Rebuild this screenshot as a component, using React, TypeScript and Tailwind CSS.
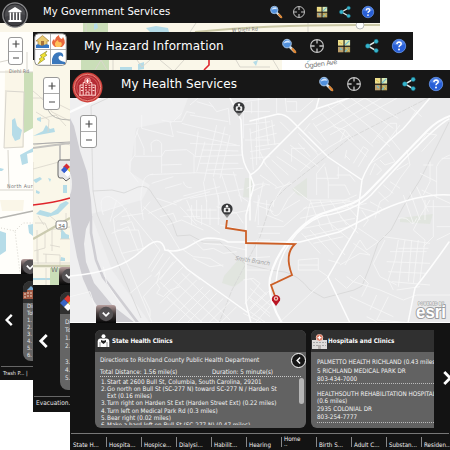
import React from "react";

const font = "font-['DejaVu_Sans_Condensed','DejaVu_Sans',sans-serif]";

function SearchIcon() {
  return (
    <svg viewBox="0 0 14 14" className="h-full w-full overflow-visible">
      <path d="M8 8L12.5 12.5" stroke="#d9e3e8" strokeWidth="2.5" strokeLinecap="round" />
      <path d="M10.5 10L13.3 13.2" stroke="#df8530" strokeWidth="2.2" strokeLinecap="round" />
      <circle cx="5" cy="4.6" r="4.3" fill="#5190dc" stroke="#a6c4e5" strokeWidth="1" />
      <path d="M1.8 4.4Q3 1.2 6.5 1.6Q8 2 8 3.8Q5 3 1.8 4.4Z" fill="#d3e6ff" />
    </svg>
  );
}
function TargetIcon() {
  return (
    <svg viewBox="0 0 14 14" className="h-full w-full overflow-visible" fill="none" stroke="#c6c6c6">
      <circle cx="7" cy="7" r="6.4" strokeWidth="1.1" />
      <path d="M7 1V4.6M7 9.4V13M1 7H4.6M9.4 7H13" strokeWidth="1.3" />
    </svg>
  );
}
function GridIcon() {
  return (
    <svg viewBox="0 0 14 14" className="h-full w-full overflow-visible">
      <rect x="1" y="1" width="5.5" height="5.6" fill="#eddf8c" />
      <rect x="7.6" y="1" width="5.5" height="5.6" fill="#dceab3" />
      <rect x="1" y="7.8" width="5.5" height="5.5" fill="#bc9f6a" />
      <rect x="7.6" y="7.8" width="5.5" height="5.5" fill="#b9a35c" />
      <path d="M8 6L12.5 1.6M8 12.8L11 9.5M3 9l2 2" stroke="#74bdcb" strokeWidth="1.2" />
      <path d="M9 9L12 12M2 3L5 5" stroke="#e0bd55" />
    </svg>
  );
}
function ShareIcon() {
  return (
    <svg viewBox="0 0 14 14" className="h-full w-full overflow-visible">
      <path d="M11 2.3L3 7L11 11.7" fill="none" stroke="#e1eded" strokeWidth="1.5" />
      <g fill="#36b5cc" stroke="#176d81" strokeWidth=".5">
        <circle cx="11.2" cy="2.4" r="2.1" /><circle cx="2.8" cy="7" r="2.3" /><circle cx="11.2" cy="11.6" r="2.1" />
      </g>
    </svg>
  );
}
function HelpIcon() {
  return (
    <svg viewBox="0 0 14 14" className="h-full w-full overflow-visible">
      <circle cx="7" cy="7" r="6.7" fill="#285fd7" stroke="#6999ed" strokeWidth=".8" />
      <path d="M1 5Q2.4.8 7 1Q11.6.8 13 5Q7 8 1 5Z" fill="#6b9af1" opacity=".5" />
      <path d="M4.9 5.1Q5 3 7.1 3Q9.2 3.1 9.2 4.8Q9.2 6 7.9 6.6Q7 7.1 7 8.3" fill="none" stroke="#fff" strokeWidth="1.5" />
      <circle cx="7" cy="10.6" r="1" fill="#fff" />
    </svg>
  );
}

function GovernmentBadge() {
  return (
    <svg width="26" height="26" viewBox="0 0 26 26">
      <circle cx="13" cy="13" r="12.2" fill="#29292c" stroke="#8c8c8e" strokeWidth="1.3" />
      <circle cx="13" cy="13" r="10.5" fill="#3f3f43" />
      <path d="M3 15Q3 3 13 2.8Q23 3 23 13Q13 10 3 15Z" fill="#56565a" opacity=".6" />
      <path d="M6.5 9L13 5L19.5 9V10.3H6.5ZM6.5 18H19.5V20H6.5Z" fill="#fff" />
      <path d="M8.4 10.5V18M11.5 10.5V18M14.6 10.5V18M17.7 10.5V18" stroke="#fff" strokeWidth="1.5" />
    </svg>
  );
}
function HazardBadge() {
  return (
    <svg width="33" height="33" viewBox="0 0 33 33">
      <rect x=".7" y=".7" width="31.6" height="31.6" rx="4" fill="#fff" stroke="#888" />
      <path d="M16.5 1V32M1 16.5H32" stroke="#9b9b9b" strokeWidth=".8" />
      <path d="M2 8L8.5 2.5L15 8L13 8V13H4V8Z" fill="#ebcb72" stroke="#a6813c" strokeWidth=".7" />
      <path d="M7 8h3v5h-3Z" fill="#a5723b" />
      <path d="M2 12Q4 10.5 6 12T10 12T15 12V15H2Z" fill="#3475c1" />
      <path d="M21 14Q15.5 10 20 6L21 8Q21 4 25 2Q25 5 28 6L29 4Q33 10 28 14Z" fill="#e9673e" />
      <path d="M22 14Q19 10 24 7Q24 10 27 9Q29 12 26 14Z" fill="#ffc25a" />
      <path d="M13 18L6 22.5L8 24L5 26L6.5 27L4 31L11 26L9 25L13 22L11 21Z" fill="#f1e331" stroke="#8b852a" strokeWidth=".6" />
      <path d="M18 31V26Q20 18 27 19.5Q30 21 29 24Q26 21 24.5 24Q24 28 31 29V31Z" fill="#3a77bc" />
    </svg>
  );
}
function HospitalBadge() {
  return (
    <svg width="31" height="31" viewBox="0 0 31 31">
      <circle cx="15.5" cy="15.5" r="15" fill="#cf3f3a" />
      <circle cx="15.5" cy="15.5" r="13.2" fill="#b72d34" stroke="#e5897e" strokeWidth="1" />
      <circle cx="15.5" cy="15.5" r="10.8" fill="#b52b34" stroke="#d96a66" strokeWidth=".7" />
      <g fill="none" stroke="#ffd4cf" strokeWidth="1">
        <path d="M11.2 23V10.5H19.8V23M8 23V13H11M20 13H23.3V23M7 23.2H24" />
        <path d="M13 13.3H15M16.5 13.3H18.5M13 15.6H15M16.5 15.6H18.5M13 18H15M16.5 18H18.5M9 15.5H11M9 18.5H11M20.5 15.5H22.5M20.5 18.5H22.5M14 23V20H17V23" />
      </g>
      <circle cx="15.5" cy="9" r="3" fill="#d94d50" stroke="#ffd5d0" strokeWidth=".6" />
      <path d="M15.5 7V11M13.5 9H17.5" stroke="#fff" strokeWidth="1.2" />
    </svg>
  );
}

type ToolbarProps = { title: string; titleClass: string; className: string; iconClass: string; badge: React.ReactNode; badgeClass: string };
function Toolbar({ title, titleClass, className, iconClass, badge, badgeClass }: ToolbarProps) {
  const icons = [<SearchIcon />, <TargetIcon />, <GridIcon />, <ShareIcon />, <HelpIcon />];
  return (
    <header className={`relative z-10 flex shrink-0 items-center bg-[#171717] ${className}`}>
      <div className={`absolute ${badgeClass}`}>{badge}</div>
      <h1 className={`whitespace-nowrap text-white font-['DejaVu_Sans',sans-serif] ${titleClass}`}>{title}</h1>
      <div className={`ml-auto flex items-center justify-between ${iconClass}`}>
        {icons.map((icon, i) => <span key={i} className="aspect-square h-full">{icon}</span>)}
      </div>
    </header>
  );
}

function ZoomControl({ className }: { className: string }) {
  return (
    <div className={`absolute flex flex-col overflow-hidden rounded-[3px] border border-[#999] bg-white ${className}`}>
      {[true, false].map((plus, i) => (
        <button key={i} className={`grid flex-1 place-items-center ${plus ? "border-b border-[#aaa]" : ""}`}>
          <svg width="8" height="8" viewBox="0 0 8 8"><path d={plus ? "M.5 4H7.5M4 .5V7.5" : "M1 4H7"} stroke="#4b4b4b" strokeWidth="1.2" /></svg>
        </button>
      ))}
    </div>
  );
}

function CollapseTab({ className }: { className: string }) {
  return (
    <div className={`absolute grid place-items-center rounded-t-[3px] bg-linear-to-b from-[#b8a09f] via-[#423a3a] to-[#080808] ${className}`}>
      <svg width="16" height="16" viewBox="0 0 16 16">
        <circle cx="8" cy="8" r="7.2" fill="#555254" />
        <path d="M4.8 6.7L8 9.8L11.2 6.7" fill="none" stroke="#fff" strokeWidth="1.8" />
      </svg>
    </div>
  );
}

function GovernmentMap() {
  return (
    <svg className="block" width="380" height="251" viewBox="0 23 380 251">
      <path fill="#fffefa" d="M0 23H380V274H0Z" />
      <path fill="#faf6e8" d="M0 23H380V32H0ZM5 70H24V148H4ZM0 200H24L23 211H2Z" />
      <path fill="#cbdeb8" d="M24 72H33V128L24 133ZM83 23H108V32H83Z" />
      <path fill="#b6dce8" d="M12 120L15 118L17 126L22 130L20 139L15 141L12 135ZM20 155L33 148V152L27 154L28 163L22 165ZM0 231L6 233L6 251L0 255ZM28 225L33 224V236L29 233ZM0 168L4 169L2 171L0 171ZM146 28L156 26L168 28L169 32H150ZM94 24L97 23L98 28L94 30Z" />
      <g fill="none" stroke="#d8d5cd">
        <path d="M0 72H33M5 91L24 92L23 147L4 148L6 92M8 150L9 189M0 190H33M27 52V73M0 62L9 60M196 23L190 32M308 23V32M86 23V32" />
        <path d="M0 218L33 211" stroke="#b5b4b0" strokeWidth="1.5" />
        <path d="M1 228L15 231L20 273M15 231L23 223H33" strokeDasharray="1 2" />
      </g>
      <path d="M195 32Q270 24 380 25" fill="none" stroke="#cbc8a5" strokeWidth="2" />
      <circle cx="360" cy="25" r="4" fill="#fff" stroke="#bbb" />
      <g className="font-['DejaVu_Sans_Condensed']" fontSize="5" fill="#777">
        <text x="9" y="73" textLength="20">Diehl Rd</text>
        <text x="232" y="32" textLength="26" transform="rotate(-3 232 32)">W Diehl Rd</text>
        <text x="7" y="188" fontSize="5.3" textLength="31">North Auror</text>
      </g>
    </svg>
  );
}

function HazardMap() {
  return (
    <svg className="block" width="380" height="225" viewBox="33 60 380 225">
      <path fill="#faf7e9" d="M33 60H413V285H33Z" />
      <path fill="#fff" d="M282 60H413V70H282ZM24 180H33V200Z" />
      <path fill="#cadeb8" d="M81 60H109V70H81ZM50 268H60V285H50Z" />
      <path fill="#b5dce7" d="M33 136L43 131L46 125L50 129L54 128L55 132L44 134ZM37 118L41 117V122L37 120ZM33 180L40 177L42 179L36 183ZM48 178L51 179L50 182ZM63 185H67V193H63ZM36 190L40 192L39 194L36 193ZM36 214L40 210L51 213L57 209L60 204L66 201L69 203L58 214L48 217ZM61 228L66 234L69 235V239H61ZM61 257L65 258L65 261L60 261ZM33 278H50V280H33ZM138 64L144 62L144 69L138 70ZM253 62L258 60L256 66ZM307 61L311 60L307 63ZM120 67H132V70H120Z" />
      <g fill="none" stroke="#d9d6cc" strokeWidth=".8">
        <path d="M33 91Q45 100 52 112L70 121M33 98H43L46 110L60 105L70 110M36 112L49 120L48 132M40 119L56 115L66 126M34 145Q60 140 70 145M33 162V207M33 169L70 159M35 223H45L48 230L70 227M37 230V261M45 231V248L34 251M52 229V251M60 239H70M43 254L60 255V268M50 245L60 247M61 220V232M33 263H70M38 216L44 225M50 216L61 225M66 213V225M46 263V254M38 250V264M46 268V285" />
        <path d="M95 70L101 60L107 70M113 60V70M137 60L142 67L150 60M160 60L172 70M184 60L175 70M273 60L279 70M236 60L240 67H270" strokeWidth="1" />
      </g>
      <path d="M33 144L70 142" stroke="#aaa" strokeWidth="1" />
      <path d="M33 148L70 143M60 144V162Q60 168 70 168" fill="none" stroke="#c4c3bf" strokeWidth="2" />
      <path d="M33 239L70 218M33 266H70" fill="none" stroke="#cbcbb0" strokeWidth="2.3" />
      <path d="M48 110Q52 120 70 120" fill="none" stroke="#b8b8b2" />
      <path d="M33 205Q53 203 70 198M209 60V65L204 70" fill="none" stroke="#df242b" strokeWidth="1.6" />
      <rect x="56" y="221" width="11" height="8" rx="2" fill="#fff" stroke="#888" />
      <text x="58" y="227.5" fontSize="6" fill="#555">34</text>
      <text x="51" y="272" fontSize="7" fill="#777" className="font-['DejaVu_Sans']">W</text>
      <text x="305" y="68.5" fontSize="6.6" fill="#777" transform="rotate(-8 305 69)" textLength="33" className="font-['DejaVu_Sans']">Ogden Ave</text>
      <path d="M60 160H74V178H70L66 181L63 178H60Q58 178 58 175V163Q58 160 60 160Z" fill="#e8e8e8" stroke="#666" />
      <path d="M66.500 163.500L70 167L66.500 170.500L63 167Z" fill="#d82c33" /><path d="M64.500 166.500L68 170L64.500 173.500L61 170Z" fill="#345ed2" /><path d="M71 166.500L74 170L71 173.500L67.500 170Z" fill="#f1df41" /><path d="M67.500 170L71 173.500L67.500 177L64 173.500Z" fill="#fff" />
    </svg>
  );
}

function ClinicPin({ x, y }: { x: number; y: number }) {
  return (
    <g transform={`translate(${x} ${y})`}>
      <path d="M-4 4L0 9L4 4Z" fill="#8e8e8e" />
      <circle r="5.6" fill="#37383a" />
      <circle cy="-2.8" r="1.2" fill="#fff" />
      <path d="M-3.2 3.2V0Q-3.200 -1.200 -2 -1.200H2Q3.200 -1.200 3.200 0V3.200Z" fill="#eee" />
      <circle cy="1" r="1.4" fill="#333" />
    </g>
  );
}

function HealthMap() {
  return (
    <svg className="block" width="380" height="225" viewBox="70 98 380 225">
      <path fill="#e9e9ea" d="M70 98H450V323H70Z" />
      <path fill="#efeff0" d="M70 98H188L180 119L136 128L130 172L150 185L142 200L91 214L112 270L150 323H70Z" />
      <path fill="#cfced3" d="M70 118L74 126L80 151L87 172L91 200L92 216L86 229L84 244L86 262L94 283L113 306L135 323H109L91 297L83 279L77 257L73 236L70 216Z" />
      <path fill="none" stroke="#cfced3" strokeWidth="2.6" d="M91 216L91 233L96 260L103 277L119 298L138 323" />
      <ellipse cx="69" cy="184" rx="3" ry="11" fill="#eee" />
      <path fill="#e1e5df" d="M224 276L238 260L247 263L246 278L234 287L222 283ZM292 189L307 178V198L298 195ZM245 178H252V198L243 197ZM400 218L433 214L430 224L400 222Z" />
      {/* Railways and streams */}
      <g fill="none" stroke="#d5d5d6" strokeWidth=".8">
        <path d="M108 98L91 106L93 191L97 214L141 318M93 191L112 190L124 193L138 187Q148 184 153 195L172 222L177 236L190 235L203 242H220L245 264L270 270L285 272Q298 275 310 290L324 298L354 290L362 286L370 266L378 243L391 230L403 207L420 180L449 122" />
        <path d="M428 98L350 138L286 188L271 203L260 237L232 290L219 323" strokeDasharray="5 1" />
      </g>
      {/* Local streets */}
      <g transform="translate(70 95) scale(.333333)" fill="none" stroke="#f5f5f6" strokeWidth="2.5">
        <path d="M215 60V100L310 125L300 80H335L350 50L375 55M275 75L305 82M205 100L195 130V180L180 200V230L205 262M200 110L222 160V180M245 170L243 145Q260 125 275 145V235M195 184H275L285 167L350 164L372 180V235M275 210L335 208M240 239L380 233L500 240M220 375Q205 300 220 260Q225 240 250 237M245 265L310 245M340 303L450 275M285 280L335 266M310 320L420 290M360 310L520 282M340 260Q345 280 365 278M375 185L520 180M320 110L500 150M335 85L475 120M360 60L475 80M385 110L375 185M405 140L380 230M440 90L402 260M465 95L430 245M480 120L450 250M400 260L410 320M430 250L450 330M455 240L485 330M490 230L515 320M360 145L510 152M395 165L505 168M390 205H505M410 225L520 220M417 20L440 50L475 40L480 90M335 55L310 80M360 30L395 0M380 20L430 35M520 55V130M545 20V55M565 0V80M515 50H600M520 20L600 10M520 90L600 80M540 100L550 225M565 90L570 195M525 135H600M540 170L600 160M540 190L600 185M100 360Q80 300 120 305Q170 330 180 375M95 350L160 330M120 380L140 315M240 320L215 350M260 310L320 330M330 335L380 390M365 330V390M395 330V390M420 340V390M445 300V390M505 300L535 320M530 280Q570 260 600 270M550 320L600 330M565 300V390" />
      </g>
      <g transform="translate(250 95) scale(.333333)" fill="none" stroke="#f6f6f7" strokeWidth="2.5">
        <path d="M80 10V55M105 0L110 50H150L190 15M110 20H140V50M210 50L350 185M230 30L370 155M260 15L400 130M290 0L430 100M330 0L445 70M185 75L310 0M195 95L360 0M210 115L410 0M240 120L440 10M240 155L300 120M205 180L240 155M250 95L285 105L310 135M285 105L270 140M180 85L160 110M145 115L205 180M120 150L205 215M100 165L180 220M80 185L140 225M65 195L115 240M0 115L75 90M15 130L80 115M15 155L90 145M20 75V210M45 65L55 150M65 75L75 150M30 170L50 215M90 80L120 110M40 200L100 270M30 240L80 275M5 290L45 270M40 260L25 330M75 280L125 265M20 330L70 350M120 260L95 280L60 340Q70 375 90 355L115 310L135 290M145 145L180 185M160 130L200 170M175 110L215 150M190 85L230 140M125 200V160H165M150 230L205 180M130 280L175 315L285 315L320 300M165 390L180 325L300 315M200 300V235L225 205M225 215L235 260V310M200 250H265V215M235 270H285L300 300M260 240H300L315 260M310 205L340 155L355 165L325 215M285 180L300 195M290 165L285 190M360 240L375 205L395 225L380 240M355 210L415 170L435 200L405 210L390 195M365 145L385 120L420 85L440 85V120L415 140M405 110L450 165M380 120L420 155M450 90L405 150M480 35L515 65M500 45L480 75M515 170L560 120L530 115L500 160M470 165L480 210L450 250L420 300L390 320L375 370M440 225L475 205M420 260L450 280M400 270L430 295M385 290L415 320M360 320L395 340M540 200V260L520 300M510 235L560 260M520 210H550M575 190H600M560 310V215Q570 190 600 180M515 285L600 325M460 300L490 385M480 290L510 375M500 275L535 350" />
      </g>
      <g transform="translate(70 200) scale(.333333)" fill="none" stroke="#f6f6f7" strokeWidth="2.5">
        <path d="M170 25L130 55L135 100L155 160L220 145L205 90L140 90M150 75L185 65L195 90M125 100L175 80L205 155M155 50L220 40M180 40L270 150M220 20L280 70L300 100L330 150M235 40L285 20L335 0M270 50L310 40L320 65M290 75L335 60L400 90M350 0L375 60L420 80L450 100M380 0V55H450M410 0V55M350 30H440M340 50H390M440 20L500 40L520 70M450 75L520 90M460 45L540 30M370 120L400 150L430 145L460 160L500 155M400 130L460 135L530 150M340 150L370 170L420 175L460 200M370 175L420 200L460 195M270 150L235 205M280 160L245 215M300 170L260 225M310 185L270 240M255 230L270 215L260 250L270 265L260 280L280 290L300 270L330 260M320 180L220 290L240 330L240 350M340 200L280 260M360 220L270 310M380 240L280 340M400 260L300 360M420 270L320 370M440 280L350 370M460 295L390 365M480 305L415 370M500 320L450 370M270 245L350 325L400 370M310 240L450 370M335 220L480 360M290 290L370 365M355 210L390 240M100 200L110 250L150 310M155 160L180 210L245 365M245 225L180 280M525 310L570 250L550 235L520 240M535 335L600 270M545 350L600 300M520 340L580 370M535 290L600 340M530 210H600M530 175L600 170M560 180V120H600M0 290L60 275L75 320" />
      </g>
      <g transform="translate(250 200) scale(.333333)" fill="none" stroke="#f6f6f7" strokeWidth="2.5">
        <path d="M25 0L15 65M50 0V45L100 65M70 20V0M100 30L150 0M20 80H100L170 20M25 100H90M180 0L210 75M210 0L250 90M240 0L290 75M275 0L325 55M160 25L330 0M150 55L350 10M160 85L315 55M165 110L300 80M190 130L280 110M155 100L210 160M180 90L250 165M205 75L285 165M235 65L300 120M270 50L325 100M300 15L390 40M335 30L355 60L340 80M325 85L385 125L350 150L330 120L305 160L285 195M270 195L330 160L360 165L310 130M145 180L205 175V210H145ZM145 195H205M205 210L235 230M235 180L270 190M235 230L65 390M255 235L290 265L330 225L355 250L335 290M290 230L310 245L390 270L460 300L500 285H600M300 290L430 350M380 285L360 330M415 290L380 360L500 370M350 350L380 365M400 110L540 130M405 120L370 190L390 230L440 255M445 120L435 180L415 240L430 270M465 120L455 180L445 260M485 120L475 245M505 120L490 250M525 60V0M540 0L510 50L490 90L525 120L510 240M420 155L530 155M410 185L540 190M415 215L530 220M445 145H535M425 245L540 255M440 270L510 260M445 55Q470 50 480 65T500 55M550 0V110L520 140M560 120L600 100M560 80H600M530 20H600M0 235L50 285M0 265L60 315M0 300L60 350M0 335L50 370M15 370L75 300M0 325L50 275" />
      </g>
      {/* Primary roads */}
      <g fill="none" stroke="#fdfdfd" strokeLinecap="round">
        <path d="M70 112L100 98" strokeWidth="2.2" />
        <path d="M70 276Q119 272 140 252T165 250C187 255 193 239 208 238Q222 238 228 242H300L339 232L382 210Q420 193 450 195" strokeWidth="1.6" />
        <path d="M230 98L241 120L242 145Q241 161 250 174L254 185L246 215V303L251 323M168 250L187 269L247 312M250 220V175Q260 170 264 160L301 123L316 109L349 98M250 121L278 114Q285 114 291 120L328 157L362 180M430 98L403 129Q372 153 362 180L356 228L328 277L350 323M316 109L319 98" strokeWidth="1.5" />
        <path d="M450 116Q438 120 427 131L370 190Q359 202 348 205L321 214C298 224 275 254 270 278Q267 299 282 323" strokeWidth="2.1" />
        <path d="M449 119Q434 126 371 195Q355 211 322 216C297 225 278 254 276 282" strokeWidth="1.5" />
        <path d="M449 242Q430 269 415 288L408 323" strokeWidth="1.5" />
      </g>
      <text x="235" y="260" transform="rotate(9 235 260)" className="font-['DejaVu_Sans_Condensed'] italic" fontSize="6" fill="#a4a4a4" textLength="35">Smith Branch</text>
      <path d="M227 220L226 228L246 231V243L295 244Q284 254 292 275L271 285L276 299" fill="none" stroke="#cc5f26" strokeWidth="1.8" />
      <ClinicPin x={239} y={107.5} /><ClinicPin x={227} y={209} />
      <path d="M276 306L272 300.500A4.200 4.200 0 1 1 280 300.500Z" fill="#b91422" /><circle cx="276" cy="298.5" r="2.200" fill="#f0c9bc" /><circle cx="276" cy="298.5" r="1" fill="#b91422" />
      <g fill="#fff" stroke="#9b9c9e" paintOrder="stroke" strokeLinejoin="round" className="font-['Liberation_Sans'] font-bold">
        <text x="416" y="318" strokeWidth="2" fontSize="17.5" textLength="30" lengthAdjust="spacingAndGlyphs">esri</text>
        <text x="418" y="305.200" fontSize="3.200" strokeWidth=".8" textLength="26">POWERED BY</text>
      </g>
      <path d="M70 322.5H450" stroke="#fff" />
    </svg>
  );
}

function Chevron({ className, right = false }: { className: string; right?: boolean }) {
  return <svg className={`shrink-0 overflow-visible ${className}`} viewBox="0 0 8 13"><path d={right ? "M1 1L6.5 6.5L1 12" : "M7 1L1.5 6.5L7 12"} fill="none" stroke="#fff" strokeWidth="2.6" /></svg>;
}
function ClinicIcon() {
  return <svg width="13" height="15" viewBox="0 0 13 15"><circle cx="6.5" cy="2.2" r="2" fill="#fff" /><path d="M3 4.500H10Q12 4.500 12.300 7V13H.7V7Q1 4.500 3 4.500Z" fill="#fff" /><path d="M4 6Q6.500 7.500 9 6V8L6.500 10L4 8Z" fill="#222" /><path d="M3 8V13M10 8V13" stroke="#444" strokeWidth=".6" /></svg>;
}
function ClinicsBuilding() {
  return <svg width="15" height="15" viewBox="0 0 15 15"><path d="M0 6H4V2H11V6H15V15H0Z" fill="#dedcda" /><path d="M1 8.5H14M1 11.5H14" stroke="#999" strokeWidth=".8" strokeDasharray="2 1" /><path d="M6 11H9V15H6Z" fill="#b5b1af" /><circle cx="7.5" cy="3.6" r="3.3" fill="#d97057" stroke="#f0ddd3" strokeWidth=".5" /><path d="M7.5 1.7V5.5M5.6 3.6H9.4" stroke="#fff" strokeWidth="1.3" /></svg>;
}
function TownHallIcon() {
  return <svg width="15" height="15" viewBox="0 0 15 15"><path d="M4 5L8 1L12 5Z" fill="#77a7cf" /><path d="M0 7H4V5H12V7H15V14H0Z" fill="#a15944" /><path d="M2 8V13M5 7V13M8 7V13M11 7V13" stroke="#eadcca" strokeDasharray="2 1" /></svg>;
}
function HazardDiamond() {
  return <svg width="16" height="16" viewBox="0 0 16 16"><path d="M8 0L12 4L8 8L4 4Z" fill="#dc3c32" /><path d="M4 4L8 8L4 12L0 8Z" fill="#3865c6" /><path d="M12 4L16 8L12 12L8 8Z" fill="#eed73c" /><path d="M8 8L12 12L8 16L4 12Z" fill="#fff" /></svg>;
}

const steps = [
  ["1.", "Start at 2600 Bull St, Columbia, South Carolina, 29201"],
  ["2.", "Go north on Bull St (SC-277 N) toward SC-277 N / Harden St"],
  ["", "Ext (0.16 miles)"],
  ["3.", "Turn right on Harden St Ext (Harden Street Ext) (0.22 miles)"],
  ["4.", "Turn left on Medical Park Rd (0.3 miles)"],
  ["5.", "Bear right (0.02 miles)"],
  ["6.", "Make a hard left on Bull St (SC-277 N) (0.47 miles)"],
];

function BackPanel({ className, arrow, card, icon, lines, linesClass, footer, footerClass }: { className: string; arrow: string; card: string; icon: React.ReactNode; lines: string[]; linesClass: string; footer: string; footerClass: string }) {
  return (
    <section className={`flex flex-col bg-[#131313] text-[#e4e4e4] ${font} ${className}`}>
      <div className="flex min-h-0 flex-1 items-start">
        <Chevron className={arrow} />
        <div className={`shrink-0 overflow-hidden rounded-lg bg-[#656565] ${card}`}>
          <div className="flex h-[22px] items-center bg-[#303030]">{icon}</div>
          <div className={`whitespace-nowrap ${linesClass}`}>{lines.map((line, i) => <p key={i}>{line}</p>)}</div>
        </div>
      </div>
      <footer className={`mx-px shrink-0 border-t border-[#666] whitespace-nowrap ${footerClass}`}>{footer}</footer>
    </section>
  );
}

function HealthPanel() {
  const tabs = ["State H...", "Hospita...", "Hospice...", "Dialysi...", "Habilit...", "Hearing", "Home", "Birth S...", "Adult C...", "Substan...", "Residen..."];
  return (
    <section className={`flex h-[127px] flex-col bg-[#131313] text-[6.3px] text-[#f4f4f4] ${font}`}>
      <div className="flex h-[110px] pt-[7px] pl-[25px]">
        <article className="h-[98px] w-[211px] shrink-0 overflow-hidden rounded-[6px] bg-[#626262]">
          <h2 className="flex h-[22px] items-center gap-[2px] bg-[#303030] pl-[2px] text-[6.3px] font-bold text-white"><ClinicIcon /><span className="tracking-[-0.12px]">State Health Clinics</span></h2>
          <div className="flex h-[16px] items-center justify-between pl-[5px]">
            <span className="whitespace-nowrap">Directions to Richland County Public Health Department</span>
            <button className="grid h-[15px] w-[15px] place-items-center rounded-full border-[1.5px] border-white bg-[#171717]"><Chevron className="mr-px h-[7px] w-[5px]" /></button>
          </div>
          <div className="ml-[5px] mr-[5px] flex h-[9px] items-center border-b border-dotted border-[#c9c9c9] leading-none">
            <span className="w-[112px] whitespace-nowrap">Total Distance: 1.56 mile(s)</span><span className="whitespace-nowrap">Duration: 5 minute(s)</span>
          </div>
          <div className="flex h-[48px] overflow-hidden pt-px pl-[6px]">
            <div className="w-[192px] shrink-0">
              {steps.map(([number, text], i) => <p key={i} className="flex h-[7.3px] items-center leading-none whitespace-nowrap"><span className="w-[6px] shrink-0">{number}</span>{text}</p>)}
            </div>
            <div className="ml-[6px] h-[26px] w-[5px] rounded-full bg-[#b6b6b6]" />
          </div>
        </article>
        <article className="ml-[5px] h-[98px] w-[123px] shrink-0 overflow-hidden rounded-l-[6px] bg-[#626262]">
          <h2 className="flex h-[22px] items-center gap-[1px] bg-[#303030] pl-px text-[6.3px] font-bold text-white"><ClinicsBuilding /><span>Hospitals and Clinics</span></h2>
          <div className="pt-[6px] pl-[6px] whitespace-nowrap">
            <div className="h-[26px] border-b border-dotted border-[#bbb] leading-[8.5px]"><p>PALMETTO HEALTH RICHLAND (0.43 miles)</p><p>5 RICHLAND MEDICAL PARK DR</p><p>803-434-7000</p></div>
            <div className="h-[39px] border-b border-dotted border-[#bbb] pt-[6px] leading-[8px]"><p>HEALTHSOUTH REHABILITATION HOSPITAL</p><p className="-mt-px">(0.6 miles)</p><p>2935 COLONIAL DR</p><p>803-254-7777</p></div>
          </div>
        </article>
        <Chevron right className="mt-[41px] ml-[9px] h-[14px] w-[9px]" />
      </div>
      <footer className="mx-px flex h-[17px] border-t border-[#777] pt-[3px] text-[6.2px]">
        {tabs.map((tab, i) => <div key={tab} className={`flex h-[10px] w-[35px] shrink-0 items-end pl-[2px] leading-[6px] whitespace-nowrap ${i ? "border-l border-[#888]" : ""}`}>{tab === "Home" ? <div className="h-[12px]"><p className="translate-y-px">Home</p><p>..</p></div> : <span className="translate-y-px">{tab}</span>}</div>)}
      </footer>
    </section>
  );
}

export default function App() {
  return (
    <main className="relative h-[450px] w-[450px] overflow-hidden bg-white">
      <section className="absolute top-0 left-0 h-[380px] w-[380px] overflow-hidden">
        <Toolbar title="My Government Services" titleClass="text-[10px] tracking-[0.08px]" className="h-[23px] pl-[43px] pr-[6px]" iconClass="h-[12px] w-[104px]" badge={<GovernmentBadge />} badgeClass="left-[2px] top-[2px]" />
        <div className="relative h-[251px]"><GovernmentMap /><ZoomControl className="left-[8px] top-[14px] h-[28px] w-[15px]" /><CollapseTab className="bottom-0 left-[21px] h-[15px] w-[18px]" /></div>
        <BackPanel className="h-[106px]" arrow="ml-[5px] mt-[40px] h-[12px] w-[8px]" card="ml-[10px] mt-[7px] h-[80px] w-[180px]" icon={<TownHallIcon />} lines={["Directions", "Total Distance:", "1.", "2.", "3.", "4.", "5.", "6."]} linesClass="pl-[4px] text-[5.8px] leading-[7px]" footer="Trash P...  |" footerClass="h-[14px] pl-[2px] pt-[2px] text-[5.5px]" />
      </section>
      <section className="absolute top-[32px] left-[33px] h-[380px] w-[380px] overflow-hidden">
        <Toolbar title="My Hazard Information" titleClass="text-[12px] tracking-[0.14px]" className="h-[28px] pl-[51px] pr-[7px]" iconClass="h-[14px] w-[124px]" badge={<HazardBadge />} badgeClass="left-[1px] top-[1px]" />
        <div className="relative h-[225px]"><HazardMap /><ZoomControl className="left-[10px] top-[17px] h-[33px] w-[17px]" /><CollapseTab className="bottom-0 left-[26px] h-[18px] w-[20px]" /></div>
        <BackPanel className="h-[127px]" arrow="ml-[6px] mt-[49px] h-[14px] w-[9px]" card="ml-[12px] mt-[7px] h-[98px] w-[180px]" icon={<HazardDiamond />} lines={["Directions", "Total Distance:", "1.", "2.", "\u00a0", "3.", "4.", "5."]} linesClass="pl-[5px] pt-[4px] text-[6.3px] leading-[8px]" footer="Evacuation..." footerClass="h-[16px] pl-[2px] pt-[2px] text-[6.5px]" />
      </section>
      <section className="absolute top-[70px] left-[70px] h-[380px] w-[380px] overflow-hidden">
        <Toolbar title="My Health Services" titleClass="text-[12px] tracking-[0.05px]" className="h-[28px] pl-[51px] pr-[7px]" iconClass="h-[14px] w-[124px]" badge={<HospitalBadge />} badgeClass="left-[2px] top-[2px]" />
        <div className="relative h-[225px]"><HealthMap /><ZoomControl className="left-[10px] top-[17px] h-[33px] w-[17px]" /><CollapseTab className="bottom-0 left-[26px] h-[18px] w-[20px]" /></div>
        <HealthPanel />
      </section>
    </main>
  );
}
